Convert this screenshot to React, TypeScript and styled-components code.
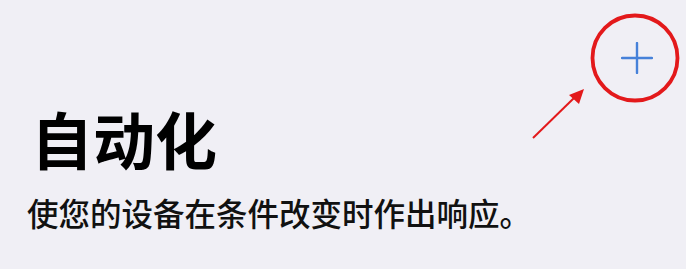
import React from "react";
import styled, { createGlobalStyle } from "styled-components";

const GlobalStyle = createGlobalStyle`
  html, body {
    margin: 0;
    background: #f0eff5;
  }
  body {
    font-family: "Noto Sans CJK SC", "Noto Sans", sans-serif;
    color: #000;
  }
`;

export default function App() {
    return (
        <>
            <GlobalStyle />
            <Screen>
                <NavBar>
                    <AddButton aria-label="添加">
                        <svg width="32" height="32" viewBox="0 0 32 32">
                            <path d="M16 1v30M1 16h30" stroke="#4681d9" strokeWidth="2.4" strokeLinecap="round" />
                        </svg>
                    </AddButton>
                </NavBar>
                <Title>自动化</Title>
                <Subtitle>使您的设备在条件改变时作出响应。</Subtitle>
                {/* red annotation drawn over the screenshot */}
                <Annotation width="686" height="269" viewBox="0 0 686 269">
                    <circle cx="635" cy="58" r="42.5" fill="none" stroke="#e3191b" strokeWidth="3.8" />
                    <line x1="533" y1="138" x2="574" y2="98" stroke="#e3191b" strokeWidth="2" />
                    <polygon points="584,89 569,95 579,104" fill="#e3191b" />
                </Annotation>
            </Screen>
        </>
    )
}

const Screen = styled.div`
    position: relative;
    width: 686px;
    height: 269px;
    overflow: hidden;
    padding-left: 27px;
    box-sizing: border-box;
`;

const NavBar = styled.div`
    display: flex;
    justify-content: flex-end;
    align-items: flex-start;
    height: 101px;
    padding: 42px 33px 0 0;
    box-sizing: border-box;
`;

const AddButton = styled.button`
    background: none;
    border: none;
    padding: 0;
    width: 32px;
    height: 32px;
    display: flex;
    cursor: pointer;
`;

const Title = styled.h1`
    margin: 0;
    padding-left: 4px;
    font-size: 62px;
    font-weight: 700;
    line-height: 74px;
`;

const Subtitle = styled.p`
    margin: 18px 0 0;
    font-size: 31.5px;
    font-weight: 500;
    line-height: 38px;
    color: #111;
`;

const Annotation = styled.svg`
    position: absolute;
    left: 0;
    top: 0;
    pointer-events: none;
`;
